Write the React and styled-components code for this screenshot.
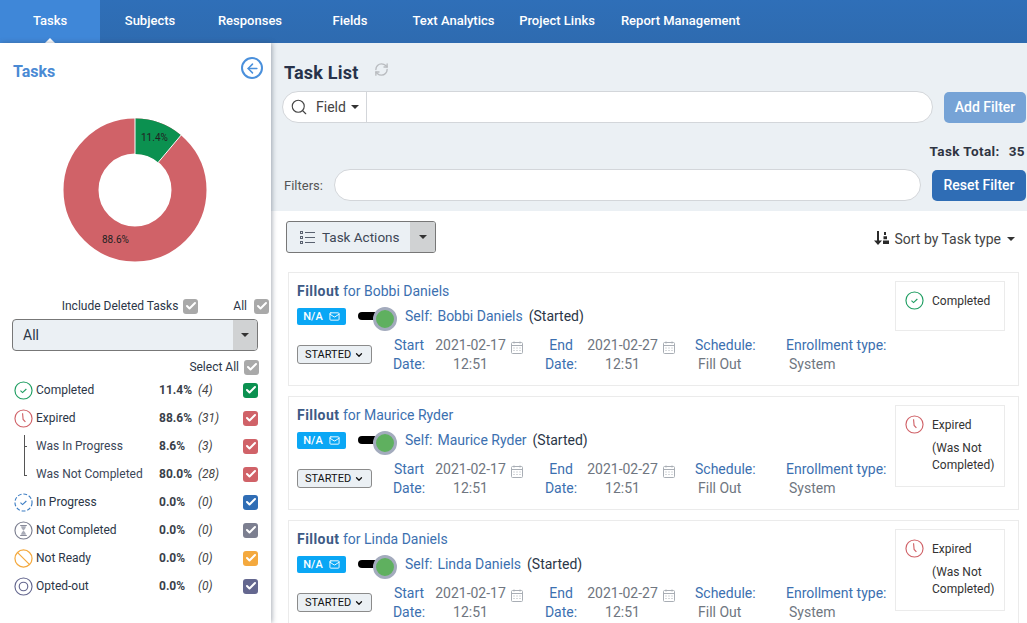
import React from 'react';
import styled, { createGlobalStyle } from 'styled-components';
import { Search, ArrowLeft, RefreshCw, ChevronDown, Mail, Check } from 'lucide-react';

const GlobalStyle = createGlobalStyle`
  html, body {
    margin: 0;
    height: 100%;
    overflow: hidden;
    background: #fff;
  }
  body {
    font-family: Roboto, "Liberation Sans", sans-serif;
    font-size: 14px;
    color: #2b3647;
  }
  * { box-sizing: border-box; }
`;

const Page = styled.div`
  width: 1027px;
  height: 623px;
  display: flex;
  flex-direction: column;
  overflow: hidden;
`;

const TopBar = styled.nav`
  flex: 0 0 43px;
  display: flex;
  background: linear-gradient(#2f6fb8, #2e6bb0);
`;

const NavItem = styled.a`
  position: relative;
  flex: 0 0 ${props => props.width}px;
  display: flex;
  align-items: center;
  justify-content: center;
  padding-bottom: 3px;
  color: #fff;
  font-size: 13px;
  font-weight: 500;
  white-space: nowrap;
  background: ${props => (props.active ? '#3f87d8' : 'transparent')};

  ${props =>
    props.active &&
    `&::after {
      content: '';
      position: absolute;
      left: 50%;
      bottom: 0;
      margin-left: -5px;
      border: 5px solid transparent;
      border-top: 0;
      border-bottom-color: #fff;
    }`}
`;

const Body = styled.div`
  flex: 1;
  display: flex;
  min-height: 0;
`;

const Sidebar = styled.aside`
  position: relative;
  z-index: 1;
  flex: 0 0 271px;
  padding: 0 13px 0 12px;
  background: #fff;
  box-shadow: 1px 0 5px rgba(60, 70, 90, 0.45);
`;

const SideHeader = styled.div`
  height: 57px;
  display: flex;
  align-items: center;
  justify-content: space-between;
`;

const SideTitle = styled.h2`
  margin: 0 0 0 1px;
  font-size: 16px;
  font-weight: 700;
  color: #4a8ad4;
`;

const BackButton = styled.span`
  width: 22px;
  height: 22px;
  margin: -7px -5px 0 0;
  display: flex;
  align-items: center;
  justify-content: center;
  border: 2px solid #4a90dc;
  border-radius: 50%;
  color: #4a90dc;
`;

const Chart = styled.svg`
  display: block;
  width: 146px;
  height: 146px;
  margin: 17px 0 0 50px;
`;

const IncludeRow = styled.div`
  margin: 35px -11px 0 0;
  display: flex;
  justify-content: flex-end;
  align-items: center;
  height: 16px;
  font-size: 12px;
`;

const CheckMark = styled.span`
  flex: none;
  width: 15px;
  height: 15px;
  margin-left: ${props => props.gap || 0}px;
  display: inline-flex;
  align-items: center;
  justify-content: center;
  border-radius: 3px;
  background: ${props => props.color || '#a9a9a9'};
  color: #fff;
`;

const AllLabel = styled.span`
  margin-left: 35px;
`;

const SelectBox = styled.div`
  margin-top: 5px;
  height: 32px;
  display: flex;
  border: 1px solid #777;
  border-radius: 4px;
  background: #ebf0f4;
  overflow: hidden;
  font-size: 14px;
`;

const SelectText = styled.span`
  flex: 1;
  padding-left: 10px;
  line-height: 30px;
`;

const Caret = styled.span`
  display: inline-block;
  border: 4px solid transparent;
  border-bottom: 0;
  border-top-color: ${props => props.color || '#333'};
  margin-left: ${props => props.gap || 0}px;
`;

const CaretCell = styled.span`
  flex: 0 0 ${props => props.width}px;
  display: flex;
  align-items: center;
  justify-content: center;
  background: #d0d2d3;
`;

const SelectAllRow = styled.div`
  margin: 8px -1px 0 0;
  height: 16px;
  display: flex;
  justify-content: flex-end;
  align-items: center;
  font-size: 12px;
`;

const StatusList = styled.div`
  margin-top: 1px;
`;

const StatusRow = styled.div`
  position: relative;
  height: 28px;
  display: grid;
  grid-template-columns: 24px 123px 39px 45px 15px;
  align-items: center;
  font-size: 12px;
`;

const StatusIconCell = styled.span`
  display: flex;
  margin-left: 2px;
`;

const Percent = styled.span`
  font-weight: 700;
  color: #3a3f4a;
`;

const Count = styled.span`
  font-style: italic;
  color: #444;
`;

const SubLabel = styled.span`
  color: #3b4658;
`;

const Branch = styled.span`
  position: absolute;
  left: 12px;
  top: ${props => props.top}px;
  width: 3px;
  height: ${props => props.height}px;
  border-left: 1px solid #555;
  border-bottom: 1px solid #555;
`;

const Main = styled.main`
  flex: 1;
  min-width: 0;
  display: flex;
  flex-direction: column;
`;

const FilterPanel = styled.section`
  flex: 0 0 168px;
  padding: 0 0 0 11px;
  background: #ebf0f4;
`;

const TitleRow = styled.div`
  height: 48px;
  display: flex;
  align-items: center;
  gap: 16px;
  padding: 10px 0 0 2px;
`;

const PageTitle = styled.h1`
  margin: 0;
  font-size: 18px;
  font-weight: 700;
  letter-spacing: 0.2px;
  color: #27324a;
`;

const RefreshSlot = styled.span`
  display: flex;
  margin-top: -6px;
  color: #b9bcc0;
`;

const ActionRow = styled.div`
  display: flex;
  align-items: center;
  gap: ${props => props.gap || 11}px;
`;

const SearchField = styled.div`
  flex: none;
  width: 651px;
  height: 32px;
  display: flex;
  align-items: stretch;
  border: 1px solid #d3d6da;
  border-radius: 16px;
  background: #fff;
  overflow: hidden;
`;

const FieldPicker = styled.div`
  flex: 0 0 84px;
  display: flex;
  align-items: center;
  padding-left: 7px;
  border-right: 1px solid #d3d6da;
  font-size: 14px;
  color: #444;
`;

const FieldText = styled.span`
  margin-left: 8px;
`;

const FilterButton = styled.button`
  flex: none;
  width: ${props => props.width}px;
  height: 31px;
  border: 0;
  border-radius: 5px;
  padding: 0;
  background: ${props => props.color};
  color: #fff;
  font: 500 14px Roboto, sans-serif;
`;

const TotalRow = styled.div`
  height: 46px;
  padding: 20px 2px 0 0;
  text-align: right;
  font-size: 13.5px;
  font-weight: 700;
  letter-spacing: 0.4px;
  color: #2f3442;
`;

const TotalNumber = styled.span`
  margin-left: 9px;
`;

const FiltersLabel = styled.label`
  flex: 0 0 39px;
  margin-left: 2px;
  font-size: 13px;
  white-space: nowrap;
  color: #555;
`;

const FiltersInput = styled.div`
  flex: none;
  width: 587px;
  height: 32px;
  border: 1px solid #d3d6da;
  border-radius: 16px;
  background: #fff;
`;

const ListArea = styled.section`
  flex: 1;
  min-height: 0;
  padding: 10px 8px 0 17px;
  background: #fff;
`;

const ListToolbar = styled.div`
  height: 32px;
  display: flex;
  justify-content: space-between;
  align-items: center;
  margin: 0 0 19px -2px;
`;

const TaskActions = styled.div`
  width: 150px;
  height: 32px;
  display: flex;
  border: 1px solid #777;
  border-radius: 3px;
  background: #ebf0f4;
  overflow: hidden;
  font-size: 13.5px;
  color: #3e4756;
`;

const TaskActionsLabel = styled.span`
  flex: 1;
  display: flex;
  align-items: center;
  gap: 7px;
  padding-left: 13px;
`;

const SortLabel = styled.span`
  display: flex;
  align-items: center;
  margin: 4px 4px 0 0;
  font-size: 14px;
  color: #444;
`;

const SortGlyph = styled.svg`
  margin-right: 5px;
  margin-top: -3px;
`;

const Card = styled.article`
  position: relative;
  width: 731px;
  height: 114px;
  margin-bottom: 10px;
  padding: 9px 8px 0 8px;
  border: 1px solid #ebebeb;
`;

const CardTitle = styled.div`
  font-size: 14px;
  line-height: 18px;
  color: #3c70b0;
`;

const Strong = styled.strong`
  font-weight: 700;
  letter-spacing: 0.45px;
  color: #3d5a85;
`;

const PersonRow = styled.div`
  height: 20px;
  margin-top: 6px;
  display: flex;
  align-items: center;
  font-size: 14px;
`;

const Badge = styled.span`
  width: 49px;
  height: 17px;
  display: flex;
  align-items: center;
  justify-content: center;
  gap: 6px;
  border-radius: 2px;
  background: #0aa7f5;
  color: #fff;
  font-size: 11px;
  font-weight: 500;
`;

const Toggle = styled.span`
  position: relative;
  width: 35px;
  height: 8px;
  margin: 0 12px 0 12px;
  border-radius: 4px;
  background: #000;

  &::after {
    content: '';
    position: absolute;
    right: -4px;
    top: -5px;
    width: 18px;
    height: 18px;
    border: 3px solid #a3abbd;
    border-radius: 50%;
    background: #5fb05f;
  }
`;

const Person = styled.span`
  color: #3c70b0;
  margin-right: 6px;
`;

const PersonName = styled.span`
  margin-left: 5px;
`;

const Detail = styled.div`
  margin-top: 10px;
  display: grid;
  grid-template-columns: 92px 40px 112px 40px 114px 91px 110px;
  align-items: start;
  font-size: 14px;
  line-height: 19px;
`;

const StateSelect = styled.span`
  width: 75px;
  height: 19px;
  margin-top: 9px;
  display: flex;
  align-items: center;
  justify-content: center;
  gap: 3px;
  border: 1px solid #8b8b8b;
  border-radius: 3px;
  background: #ebf0f4;
  font-size: 11px;
  color: #111;
`;

const DateLabel = styled.div`
  text-align: center;
  color: #3c70b0;
`;

const DateValue = styled.div`
  position: relative;
  width: 71px;
  margin-left: 6px;
  text-align: center;
  color: #6f7680;
`;

const CalendarSlot = styled.span`
  position: absolute;
  left: 76px;
  top: 5px;
  display: flex;
  color: #a9aeb5;
`;

const InfoLabel = styled.div`
  white-space: nowrap;
  color: #3c70b0;
`;

const InfoValue = styled.div`
  padding-left: 3px;
  color: #6f7680;
`;

const StatusBox = styled.div`
  position: absolute;
  top: 8px;
  right: 13px;
  width: 110px;
  height: ${props => props.height}px;
  padding: 9px 6px 0 9px;
  display: flex;
  gap: 8px;
  border: 1px solid #ebebeb;
  font-size: 12px;
  color: #333;
`;

const StatusIcon = styled.span`
  flex: none;
  display: flex;
  height: 19px;
`;

const StatusText = styled.div`
  padding-top: 3px;
`;

const StatusNote = styled.div`
  margin-top: 8px;
  line-height: 17px;
`;

const CheckIcon = ({ color, dashed }) => (
  <svg width="19" height="19" viewBox="0 0 20 20" fill="none" stroke={color} strokeWidth="1.2">
    <circle cx="10" cy="10" r="9" strokeDasharray={dashed ? '4 2' : undefined} />
    <path d="M6.8 10.2l2.2 2 4-3.8" />
  </svg>
);

const ClockIcon = ({ color }) => (
  <svg width="19" height="19" viewBox="0 0 20 20" fill="none" stroke={color} strokeWidth="1.2">
    <circle cx="10" cy="10" r="9" />
    <path d="M9 4.5l.6 6.5 2.4 2.6" />
  </svg>
);

const HourglassIcon = () => (
  <svg width="19" height="19" viewBox="0 0 20 20" fill="none" stroke="#7c7f90" strokeWidth="1.2">
    <circle cx="10" cy="10" r="9" />
    <path d="M6.5 4.8h7M6.5 15.2h7" strokeWidth="1" />
    <path d="M7.5 5.5h5c0 2.5-1.6 3.4-2.5 4.5-.9-1.1-2.5-2-2.5-4.5zM10 10c.9 1.1 2.5 2 2.5 4.5h-5c0-2.5 1.6-3.4 2.5-4.5z" fill="#a9acb8" stroke="none" />
  </svg>
);

const NotReadyIcon = () => (
  <svg width="19" height="19" viewBox="0 0 20 20" fill="none" stroke="#f4a93e" strokeWidth="1.3">
    <circle cx="10" cy="10" r="9" />
    <path d="M3.8 3.8l12.4 12.4" />
  </svg>
);

const OptedIcon = () => (
  <svg width="19" height="19" viewBox="0 0 20 20" fill="none" stroke="#64678f" strokeWidth="1.2">
    <circle cx="10" cy="10" r="9" />
    <circle cx="10" cy="10" r="4.5" />
  </svg>
);

const CalendarIcon = () => (
  <svg width="12" height="13" viewBox="0 0 12 13" fill="none" stroke="currentColor" strokeWidth="1">
    <rect x="0.5" y="1.5" width="11" height="11" rx="1" />
    <path d="M.5 4.5h11M3 .5v2M9 .5v2M2.5 7h1M5.5 7h1M8.5 7h1M2.5 9.5h1M5.5 9.5h1M8.5 9.5h1" />
  </svg>
);

const ListIcon = () => (
  <svg width="15" height="13" viewBox="0 0 15 13" fill="none" stroke="#5a6270" strokeWidth="1">
    <rect x="0.5" y="0.5" width="2" height="2" />
    <rect x="0.5" y="5.5" width="2" height="2" />
    <rect x="0.5" y="10.5" width="2" height="2" />
    <path d="M5 1.5h10M5 6.5h10M5 11.5h10" />
  </svg>
);

const SortIcon = () => (
  <SortGlyph width="15" height="14" viewBox="0 0 15 14" fill="#2b2b2b">
    <path d="M3 0h2v9.5h3L4 14 0 9.5h3z" />
    <path d="M10 1h2v3h-2zM9.5 5.2h3.5v3H9.5zM9 9.5h6V13H9z" />
  </SortGlyph>
);

const Donut = () => (
  <Chart viewBox="0 0 146 146">
    <circle cx="73" cy="73" r="54" fill="none" stroke="#d06268" strokeWidth="35" />
    <path d="M73 1.5A71.5 71.5 0 0 1 119 18.2L96.2 45.4A36 36 0 0 0 73 37Z" fill="#0b9150" />
    <path d="M73 1V37M119.3 17.9L96.2 45.4" stroke="#fff" strokeWidth="1" />
    <text x="79" y="24" fontSize="10" fill="#222" fontFamily="Roboto, sans-serif">11.4%</text>
    <text x="40" y="126" fontSize="10" fill="#222" fontFamily="Roboto, sans-serif">88.6%</text>
  </Chart>
);

const tabs = [
  ['Tasks', 100],
  ['Subjects', 100],
  ['Responses', 100],
  ['Fields', 100],
  ['Text Analytics', 107],
  ['Project Links', 100],
  ['Report Management', 147],
];

const statuses = [
  { label: 'Completed', pct: '11.4%', count: '(4)', color: '#0b9150', icon: <CheckIcon color="#1f9e62" /> },
  { label: 'Expired', pct: '88.6%', count: '(31)', color: '#d06268', icon: <ClockIcon color="#d06268" /> },
  { label: 'Was In Progress', pct: '8.6%', count: '(3)', color: '#d06268', sub: true },
  { label: 'Was Not Completed', pct: '80.0%', count: '(28)', color: '#d06268', sub: true },
  { label: 'In Progress', pct: '0.0%', count: '(0)', color: '#2f6db5', icon: <CheckIcon color="#3f7fc4" dashed /> },
  { label: 'Not Completed', pct: '0.0%', count: '(0)', color: '#7c7f90', icon: <HourglassIcon /> },
  { label: 'Not Ready', pct: '0.0%', count: '(0)', color: '#f4a93e', icon: <NotReadyIcon /> },
  { label: 'Opted-out', pct: '0.0%', count: '(0)', color: '#64678f', icon: <OptedIcon /> },
];

const tasks = [
  { name: 'Bobbi Daniels', status: 'Completed', boxHeight: 50 },
  { name: 'Maurice Ryder', status: 'Expired', note: true, boxHeight: 82 },
  { name: 'Linda Daniels', status: 'Expired', note: true, boxHeight: 82 },
];

const Tick = () => <Check size={12} strokeWidth={4} />;

const DateBlock = ({ word, date }) => (
  <>
    <DateLabel>
      {word}
      <br />
      Date:
    </DateLabel>
    <DateValue>
      {date}
      <br />
      12:51
      <CalendarSlot>
        <CalendarIcon />
      </CalendarSlot>
    </DateValue>
  </>
);

const TaskCard = ({ task }) => (
  <Card>
    <CardTitle>
      <Strong>Fillout</Strong> for {task.name}
    </CardTitle>
    <PersonRow>
      <Badge>
        N/A <Mail size={11} />
      </Badge>
      <Toggle />
      <Person>
        Self:<PersonName>{task.name}</PersonName>
      </Person>
      (Started)
    </PersonRow>
    <Detail>
      <StateSelect>
        STARTED <ChevronDown size={10} strokeWidth={3} />
      </StateSelect>
      <DateBlock word="Start" date="2021-02-17" />
      <DateBlock word="End" date="2021-02-27" />
      <div>
        <InfoLabel>Schedule:</InfoLabel>
        <InfoValue>Fill Out</InfoValue>
      </div>
      <div>
        <InfoLabel>Enrollment type:</InfoLabel>
        <InfoValue>System</InfoValue>
      </div>
    </Detail>
    <StatusBox height={task.boxHeight}>
      <StatusIcon>
        {task.status === 'Completed' ? <CheckIcon color="#1f9e62" /> : <ClockIcon color="#d06268" />}
      </StatusIcon>
      <StatusText>
        {task.status}
        {task.note && <StatusNote>(Was Not Completed)</StatusNote>}
      </StatusText>
    </StatusBox>
  </Card>
);

const App = () => (
  <Page>
    <GlobalStyle />
    <TopBar>
      {tabs.map(([label, width], i) => (
        <NavItem key={label} width={width} active={i === 0 || undefined}>
          {label}
        </NavItem>
      ))}
    </TopBar>
    <Body>
      <Sidebar>
        <SideHeader>
          <SideTitle>Tasks</SideTitle>
          <BackButton>
            <ArrowLeft size={15} strokeWidth={2.4} />
          </BackButton>
        </SideHeader>
        <Donut />
        <IncludeRow>
          Include Deleted Tasks
          <CheckMark gap={5}>
            <Tick />
          </CheckMark>
          <AllLabel>All</AllLabel>
          <CheckMark gap={7}>
            <Tick />
          </CheckMark>
        </IncludeRow>
        <SelectBox>
          <SelectText>All</SelectText>
          <CaretCell width={24}>
            <Caret />
          </CaretCell>
        </SelectBox>
        <SelectAllRow>
          Select All
          <CheckMark gap={5}>
            <Tick />
          </CheckMark>
        </SelectAllRow>
        <StatusList>
          {statuses.map(s => (
            <StatusRow key={s.label}>
              <StatusIconCell>{s.icon}</StatusIconCell>
              {s.sub ? <SubLabel>{s.label}</SubLabel> : <span>{s.label}</span>}
              <Percent>{s.pct}</Percent>
              <Count>{s.count}</Count>
              <CheckMark color={s.color}>
                <Tick />
              </CheckMark>
              {s.label === 'Was In Progress' && <Branch top={3} height={12} />}
              {s.label === 'Was In Progress' && <Branch top={15} height={29} />}
            </StatusRow>
          ))}
        </StatusList>
      </Sidebar>
      <Main>
        <FilterPanel>
          <TitleRow>
            <PageTitle>Task List</PageTitle>
            <RefreshSlot>
              <RefreshCw size={15} strokeWidth={2.2} />
            </RefreshSlot>
          </TitleRow>
          <ActionRow>
            <SearchField>
              <FieldPicker>
                <Search size={18} strokeWidth={1.5} />
                <FieldText>Field</FieldText>
                <Caret gap={5} />
              </FieldPicker>
            </SearchField>
            <FilterButton width={82} color="#76a3d6">
              Add Filter
            </FilterButton>
          </ActionRow>
          <TotalRow>
            Task Total:
            <TotalNumber>35</TotalNumber>
          </TotalRow>
          <ActionRow>
            <FiltersLabel>Filters:</FiltersLabel>
            <FiltersInput />
            <FilterButton width={94} color="#2f6db5">
              Reset Filter
            </FilterButton>
          </ActionRow>
        </FilterPanel>
        <ListArea>
          <ListToolbar>
            <TaskActions>
              <TaskActionsLabel>
                <ListIcon />
                Task Actions
              </TaskActionsLabel>
              <CaretCell width={25}>
                <Caret />
              </CaretCell>
            </TaskActions>
            <SortLabel>
              <SortIcon />
              Sort by Task type
              <Caret gap={6} />
            </SortLabel>
          </ListToolbar>
          {tasks.map(task => (
            <TaskCard key={task.name} task={task} />
          ))}
        </ListArea>
      </Main>
    </Body>
  </Page>
);

export default App;
